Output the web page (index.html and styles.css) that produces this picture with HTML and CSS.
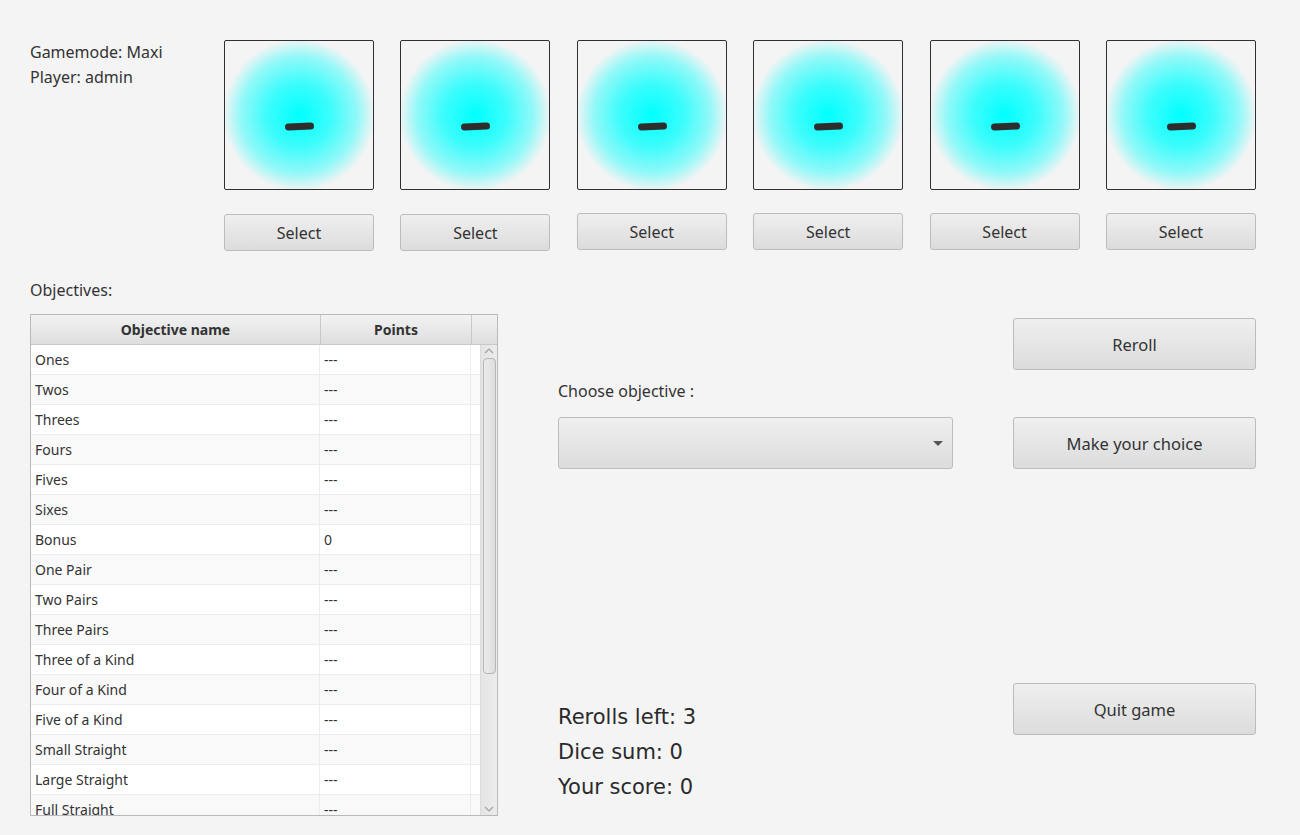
FILE: index.html
```html
<!DOCTYPE html>
<html>
<head>
<meta charset="utf-8">
<link rel="stylesheet" href="styles.css">
</head>
<body>
<div class="app">
  <div class="top">
    <div class="info">
      <div>Gamemode: Maxi</div>
      <div>Player: admin</div>
    </div>
    <div class="dice">
      <div class="die-col"><div class="die"><span class="pip"></span></div><button class="btn sel">Select</button></div>
      <div class="die-col"><div class="die"><span class="pip"></span></div><button class="btn sel">Select</button></div>
      <div class="die-col up"><div class="die"><span class="pip"></span></div><button class="btn sel">Select</button></div>
      <div class="die-col up"><div class="die"><span class="pip"></span></div><button class="btn sel">Select</button></div>
      <div class="die-col up"><div class="die"><span class="pip"></span></div><button class="btn sel">Select</button></div>
      <div class="die-col up"><div class="die"><span class="pip"></span></div><button class="btn sel">Select</button></div>
    </div>
  </div>
  <div class="main">
    <div class="left">
      <div class="label obj-label">Objectives:</div>
      <div class="table">
        <div class="thead">
          <div class="th">Objective name</div>
          <div class="th">Points</div>
          <div class="th"></div>
        </div>
        <div class="tbody">
          <div class="rows">
            <div class="tr"><div class="td">Ones</div><div class="td">---</div><div class="td"></div></div>
            <div class="tr"><div class="td">Twos</div><div class="td">---</div><div class="td"></div></div>
            <div class="tr"><div class="td">Threes</div><div class="td">---</div><div class="td"></div></div>
            <div class="tr"><div class="td">Fours</div><div class="td">---</div><div class="td"></div></div>
            <div class="tr"><div class="td">Fives</div><div class="td">---</div><div class="td"></div></div>
            <div class="tr"><div class="td">Sixes</div><div class="td">---</div><div class="td"></div></div>
            <div class="tr"><div class="td">Bonus</div><div class="td">0</div><div class="td"></div></div>
            <div class="tr"><div class="td">One Pair</div><div class="td">---</div><div class="td"></div></div>
            <div class="tr"><div class="td">Two Pairs</div><div class="td">---</div><div class="td"></div></div>
            <div class="tr"><div class="td">Three Pairs</div><div class="td">---</div><div class="td"></div></div>
            <div class="tr"><div class="td">Three of a Kind</div><div class="td">---</div><div class="td"></div></div>
            <div class="tr"><div class="td">Four of a Kind</div><div class="td">---</div><div class="td"></div></div>
            <div class="tr"><div class="td">Five of a Kind</div><div class="td">---</div><div class="td"></div></div>
            <div class="tr"><div class="td">Small Straight</div><div class="td">---</div><div class="td"></div></div>
            <div class="tr"><div class="td">Large Straight</div><div class="td">---</div><div class="td"></div></div>
            <div class="tr"><div class="td">Full Straight</div><div class="td">---</div><div class="td"></div></div>
          </div>
          <div class="scrollbar">
            <svg class="arrow" width="14" height="8" viewBox="0 0 14 8"><path d="M3 6 L7 2 L11 6" fill="none" stroke="#a0a0a0" stroke-width="1.2"/></svg>
            <div class="track"><div class="thumb"></div></div>
            <svg class="arrow" width="14" height="8" viewBox="0 0 14 8"><path d="M3 2 L7 6 L11 2" fill="none" stroke="#a0a0a0" stroke-width="1.2"/></svg>
          </div>
        </div>
      </div>
    </div>
    <div class="middle">
      <div class="label choose-label">Choose objective :</div>
      <div class="combo"><span class="caret"></span></div>
      <div class="stats">
        <div>Rerolls left: 3</div>
        <div>Dice sum: 0</div>
        <div>Your score: 0</div>
      </div>
    </div>
    <div class="right">
      <button class="btn big reroll">Reroll</button>
      <button class="btn big choice">Make your choice</button>
      <button class="btn big quit">Quit game</button>
    </div>
  </div>
</div>
</body>
</html>
```

FILE: styles.css
```css
html, body {
  margin: 0;
  padding: 0;
  background: #f4f4f4;
}
body {
  font-family: "Noto Sans", "Open Sans", sans-serif;
  color: #333;
  width: 1300px;
  height: 835px;
  overflow: hidden;
}
.app {
  padding: 40px 0 0 30px;
}
.top {
  display: flex;
}
.info {
  width: 194px;
  font-size: 16px;
  line-height: 25px;
}
.dice {
  display: flex;
  gap: 26.4px;
}
.die-col {
  display: flex;
  flex-direction: column;
  width: 150px;
}
.die {
  box-sizing: border-box;
  width: 150px;
  height: 150px;
  border: 1.5px solid #303030;
  border-radius: 2px;
  background: radial-gradient(circle at 50% 50%, #00ffff 0px, rgba(0,255,255,0.75) 32px, rgba(0,255,255,0.4) 58px, rgba(0,255,255,0) 76px), #f4f4f4;
  position: relative;
}
.pip {
  position: absolute;
  left: 60px;
  top: 82px;
  width: 29px;
  height: 7px;
  border-radius: 4px;
  background: #2d2d2d;
  transform: rotate(-2deg);
}
.btn {
  font-family: "Noto Sans", "Open Sans", sans-serif;
  color: #333;
  font-size: 16px;
  border: 1px solid #bcbcbc;
  border-radius: 3px;
  background: linear-gradient(#efefef, #dcdcdc);
  box-sizing: border-box;
  padding: 0;
  cursor: pointer;
}
.sel {
  margin-top: 24px;
  height: 37px;
  width: 150px;
}
.die-col.up .sel {
  margin-top: 23px;
}
.main {
  display: flex;
  margin-top: 29px;
}
.label {
  font-size: 16px;
  line-height: 20px;
}
.left {
  width: 468px;
}
.obj-label {
  margin-bottom: 14px;
}
.table {
  box-sizing: border-box;
  width: 468px;
  height: 502px;
  border: 1px solid #b9b9b9;
  background: #fff;
  display: flex;
  flex-direction: column;
  overflow: hidden;
}
.thead {
  display: grid;
  grid-template-columns: 290px 151px 25px;
  height: 29px;
  flex: none;
  background: linear-gradient(#f2f2f2, #dedede);
  border-bottom: 1px solid #c8c8c8;
}
.th {
  font-weight: bold;
  font-size: 14px;
  display: flex;
  align-items: center;
  justify-content: center;
  border-right: 1px solid #c8c8c8;
}
.th:last-child {
  border-right: none;
}
.tbody {
  display: flex;
  flex: 1;
  min-height: 0;
}
.rows {
  width: 450px;
  overflow: hidden;
}
.tr {
  display: grid;
  grid-template-columns: 289px 151px 10px;
  height: 30px;
  box-sizing: border-box;
  border-bottom: 1px solid #ececec;
  background: #fff;
}
.tr:nth-child(even) {
  background: #f9f9f9;
}
.td {
  font-size: 14px;
  padding-left: 4px;
  display: flex;
  align-items: center;
  border-right: 1px solid #ececec;
}
.td:last-child {
  border-right: none;
}
.scrollbar {
  width: 16px;
  background: linear-gradient(90deg, #e4e4e4, #ececec);
  border-left: 1px solid #dcdcdc;
  display: flex;
  flex-direction: column;
  align-items: center;
}
.arrow {
  flex: none;
  margin: 2px 0;
}
.track {
  flex: 1;
  width: 100%;
  display: flex;
  justify-content: center;
}
.thumb {
  box-sizing: border-box;
  width: 13px;
  height: 316px;
  margin-top: 1px;
  border: 1px solid #b6b6b6;
  border-radius: 4px;
  background: linear-gradient(90deg, #ececec, #dcdcdc);
}
.middle {
  width: 395px;
  margin-left: 60px;
  display: flex;
  flex-direction: column;
}
.choose-label {
  margin-top: 101px;
}
.combo {
  box-sizing: border-box;
  margin-top: 16px;
  height: 52px;
  width: 395px;
  border: 1px solid #bcbcbc;
  border-radius: 3px;
  background: linear-gradient(#efefef, #dcdcdc);
  position: relative;
}
.caret {
  position: absolute;
  right: 9px;
  top: 23px;
  width: 0;
  height: 0;
  border-left: 5px solid transparent;
  border-right: 5px solid transparent;
  border-top: 5px solid #555;
}
.stats {
  margin-top: 231px;
  font-family: "DejaVu Sans", sans-serif;
  font-size: 21px;
  line-height: 35px;
  color: #2a2a2a;
}
.right {
  width: 243px;
  margin-left: 60px;
  display: flex;
  flex-direction: column;
}
.big {
  height: 52px;
  width: 243px;
  font-size: 16.5px;
}
.reroll {
  margin-top: 38px;
}
.choice {
  margin-top: 47px;
}
.quit {
  margin-top: 214px;
}
```
